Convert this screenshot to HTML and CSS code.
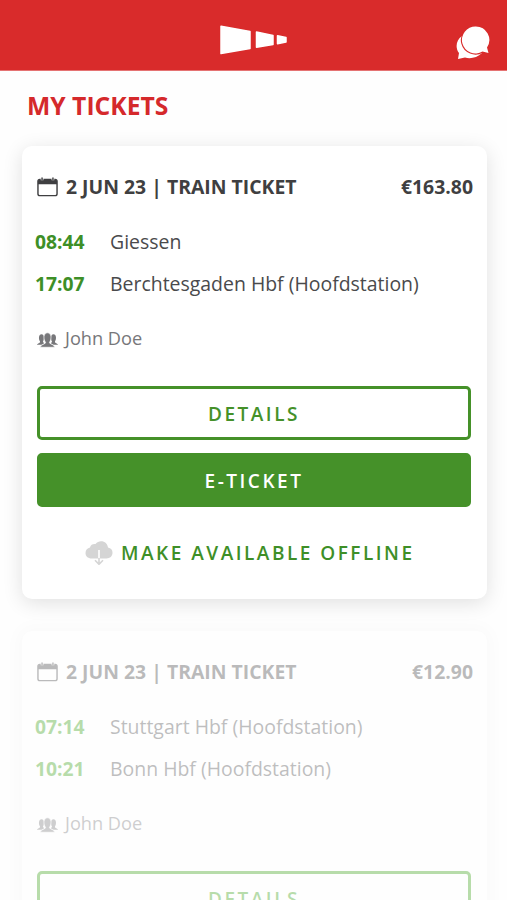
FILE: index.html
```html
<!DOCTYPE html>
<html lang="en">
<head>
<meta charset="utf-8">
<title>My tickets</title>
<link rel="stylesheet" href="styles.css">
</head>
<body>
<svg class="defs" width="0" height="0">
  <symbol id="calendar" viewBox="0 0 22 20">
    <path d="M3 2h16a2 2 0 0 1 2 2v13a2 2 0 0 1-2 2H3a2 2 0 0 1-2-2V4a2 2 0 0 1 2-2z" fill="none" stroke="currentColor" stroke-width="1.500"/>
    <path d="M1 7V3.500L3 2h16l2 1.500V7z" fill="currentColor"/>
    <path d="M5.300 0v3M16.700 0v3" stroke="#fff" stroke-width="2.800"/>
    <path d="M5.300 0v3M16.700 0v3" stroke="currentColor" stroke-width="1.500"/>
  </symbol>
  <symbol id="people" viewBox="0 0 22 16">
    <path d="M0 13c.2-1.500 3.200-1.500 3.200-3.500C1.500 7.500 1.500 2 4.800 2c3 0 3 5.500 1.500 7.500 0 1 .8 1.400 1.500 1.800L5.200 13zM22 13c-.2-1.500-3.200-1.500-3.200-3.500 1.700-2 1.700-7.500-1.600-7.500-3 0-3 5.500-1.500 7.500 0 1-.8 1.400-1.500 1.800l2.600 1.700z" fill="currentColor"/>
    <path d="M3.600 15.600c0-3.300 5.400-3 5.400-5.100C6.500 7.500 6.500.5 11 .5s4.500 7 2 10c0 2.100 5.400 1.800 5.400 5.100z" fill="currentColor" stroke="#fff" stroke-width=".7"/>
  </symbol>
</svg>
<header class="topbar">
  <svg class="logo" viewBox="0 0 68 30">
    <path d="M2 1.200 31 6.500V23.500L2 28.500zM37.500 7 54 10.500V19.500L37.500 22.200zM58.500 10.800 67 12.500V17L58.500 18.700z" fill="#fff" stroke="#fff" stroke-width="1.500" stroke-linejoin="round"/>
  </svg>
  <svg class="chat" viewBox="0 0 34 34">
    <path d="M2 33 3 27C-1 22 0 14 6 10L26 27C21 32 14 33 9 31.500z" fill="#fff"/>
    <path d="M19.700.5a13.500 13.500 0 0 1 11.300 21l1.500 5.500-6-1.500A13.500 13.500 0 1 1 19.700.5z" fill="#fff" stroke="#d92b2b" stroke-width="2.200" paint-order="stroke"/>
  </svg>
</header>
<main>
  <h1 class="title">MY TICKETS</h1>
  <article class="card">
    <div class="head"><svg class="cal"><use href="#calendar"/></svg><span class="kind">2 JUN 23 | TRAIN TICKET</span><span class="price">€163.80</span></div>
    <div class="stop first"><span class="time">08:44</span><span class="place">Giessen</span></div>
    <div class="stop"><span class="time">17:07</span><span class="place">Berchtesgaden Hbf (Hoofdstation)</span></div>
    <div class="person"><svg class="ppl"><use href="#people"/></svg><span>John Doe</span></div>
    <a class="button outline">DETAILS</a>
    <a class="button solid">E-TICKET</a>
    <a class="offline">
      <svg class="cloud" viewBox="0 0 28 24">
        <path d="M7 17.500C2.500 17.500.5 15 .5 12c0-3 2-5 4.500-5.500C5.500 3.500 8.500 2.500 10.500 3 12 1 14 .2 16 .2c4 0 6.500 2.600 7 6.300 3 .5 4.500 2.500 4.500 5.300 0 3.500-2.500 5.700-6 5.700z" fill="#d5d5d5"/>
        <path d="M14 9v8.500" stroke="#fff" stroke-width="1.600"/>
        <path d="M14 17v6M10 19.300l4 4 4-4" fill="none" stroke="#d5d5d5" stroke-width="1.600"/>
      </svg>
      <span>MAKE AVAILABLE OFFLINE</span>
    </a>
  </article>
  <article class="card faded">
    <div class="head"><svg class="cal"><use href="#calendar"/></svg><span class="kind">2 JUN 23 | TRAIN TICKET</span><span class="price">€12.90</span></div>
    <div class="stop first"><span class="time">07:14</span><span class="place">Stuttgart Hbf (Hoofdstation)</span></div>
    <div class="stop"><span class="time">10:21</span><span class="place">Bonn Hbf (Hoofdstation)</span></div>
    <div class="person"><svg class="ppl"><use href="#people"/></svg><span>John Doe</span></div>
    <a class="button outline">DETAILS</a>
  </article>
</main>
</body>
</html>
```
FILE: styles.css
```css
* { box-sizing: border-box; }
html, body { height: 900px; overflow: hidden; }
body {
  margin: 0;
  background: #fefefe;
  color: #3f3f41;
  font-family: "Open Sans", sans-serif;
  font-size: 19px;
}
.defs { display: block; }
.topbar {
  height: 71px;
  background: #d92b2b;
  border-bottom: 1px solid #e57373;
  display: grid;
  grid-template-columns: 1fr 68px 1fr;
  padding: 25px 17px 0 16px;
}
.logo { grid-column: 2; width: 68px; height: 30px; }
.chat { justify-self: end; width: 34px; height: 34px; margin-top: 1px; }
.title {
  margin: 0;
  height: 75px;
  padding-left: 27px;
  color: #d5292b;
  font-size: 24.7px;
  font-weight: 700;
  line-height: 70px;
}
.card {
  width: 465px;
  height: 453px;
  margin: 0 0 32px 22px;
  padding: 20px 14px 0 15px;
  border-radius: 10px;
  background: #fff;
  box-shadow: 0 4px 20px rgba(0, 0, 0, .12);
}
.faded { opacity: .35; box-shadow: 0 0 16px rgba(0, 0, 0, .07); }
.head { display: flex; align-items: center; height: 40px; font-size: 19.4px; font-weight: 700; }
.cal { width: 21px; height: 20px; margin: 2px 8px 0 0; }
.price { margin-left: auto; }
.stop { display: flex; align-items: center; height: 42px; padding-left: 13px; margin-left: -15px; font-size: 19.45px; }
.first { margin-top: 14px; }
.time { width: 75px; color: #3e8f27; font-weight: 700; font-size: 19.3px; }
.faded .time, .faded .outline { color: #35a010; border-color: #35a010; }
.place { color: #4a4a4c; }
.person { display: flex; align-items: center; height: 40px; margin-top: 14px; color: #77777a; font-size: 18.2px; }
.ppl { width: 21px; height: 16px; margin: 3px 7px 0 0; }
.button {
  display: flex;
  align-items: center;
  justify-content: center;
  width: 434px;
  height: 54px;
  padding-top: 1px;
  border: 3px solid #459129;
  border-radius: 5px;
  font-weight: 600;
  letter-spacing: 2.5px;
}
.outline { margin: 28px 0 13px; color: #459129; }
.solid { background: #459129; color: #fff; }
.offline { display: flex; align-items: center; height: 40px; margin: 26px 0 0 48px; color: #3e8f27; font-weight: 600; letter-spacing: 2.5px; }
.cloud { width: 28px; height: 24px; margin-right: 8px; }
```
